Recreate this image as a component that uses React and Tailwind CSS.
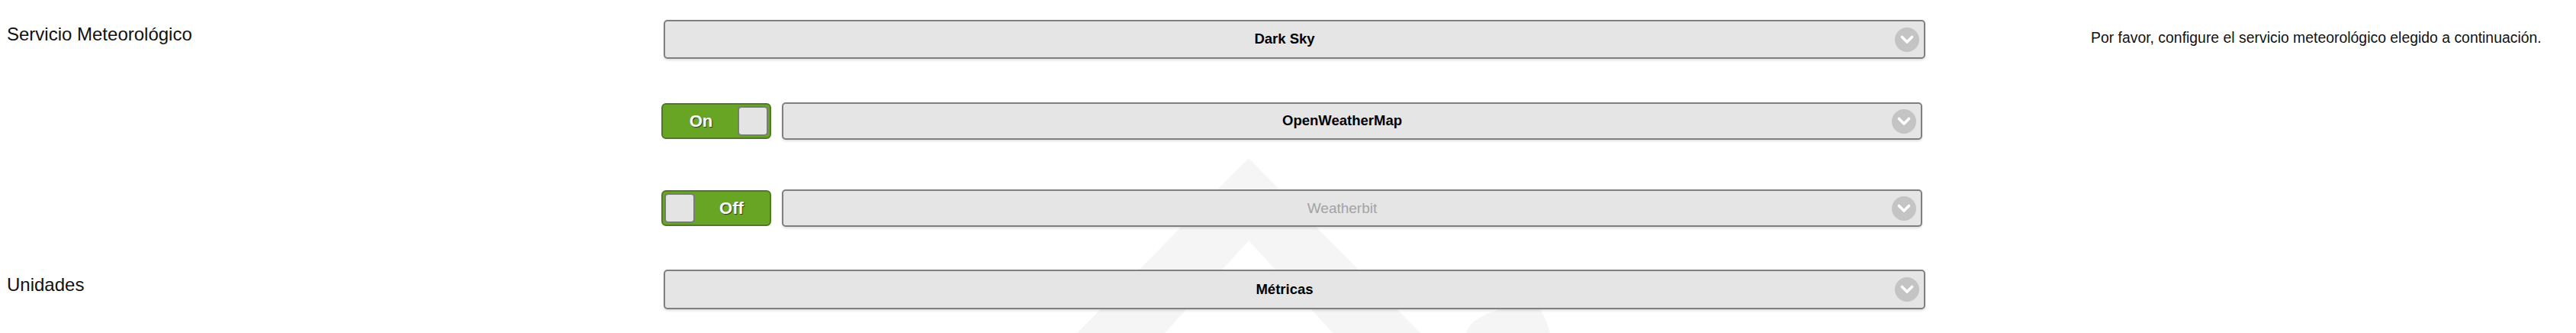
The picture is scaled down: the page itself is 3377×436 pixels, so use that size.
import React from "react";

function Chevron() {
  return (
    <div className="absolute right-[6px] top-1/2 -translate-y-1/2 w-[32px] h-[32px] rounded-full bg-[#c4c4c4] flex items-center justify-center">
      <svg width="18" height="12" viewBox="0 0 18 12">
        <path d="M2.5 2.5 L9 9 L15.5 2.5" fill="none" stroke="#ffffff" strokeWidth="3.6" strokeLinecap="round" strokeLinejoin="round" />
      </svg>
    </div>
  );
}

function Select({ label, h, disabled, className }) {
  return (
    <div
      className={
        "relative flex items-center justify-center border-2 border-[#7f7f7f] rounded-[5px] bg-[#e5e5e5] shadow-[0_2px_3px_rgba(0,0,0,0.12)] pr-[26px] " +
        className
      }
      style={{ height: h }}
    >
      {disabled ? (
        <span className="text-[19px] leading-none text-[#a3a3a3]">{label}</span>
      ) : (
        <span className="text-[18.5px] leading-none font-bold text-black">{label}</span>
      )}
      <Chevron />
    </div>
  );
}

function Toggle({ on }) {
  return (
    <div className="w-[144px] h-[47px] shrink-0 rounded-[6px] border-2 border-[#4f7a21] bg-[#69a524] p-[2px] flex items-stretch">
      {on ? (
        <>
          <div className="flex-1 flex items-center justify-center text-white font-bold text-[22px] leading-none [text-shadow:1px_1px_1px_#2d3d1a]">On</div>
          <div className="w-[40px] rounded-[5px] bg-[#e4e4e4] border-2 border-[#7a7a7a]" />
        </>
      ) : (
        <>
          <div className="w-[40px] rounded-[5px] bg-[#e4e4e4] border-2 border-[#7a7a7a]" />
          <div className="flex-1 flex items-center justify-center text-white font-bold text-[22px] leading-none [text-shadow:1px_1px_1px_#2d3d1a]">Off</div>
        </>
      )}
    </div>
  );
}

export default function App() {
  return (
    <div
      className="relative w-[3377px] h-[436px] bg-white overflow-hidden"
      style={{ fontFamily: '"Liberation Sans", Arial, sans-serif' }}
    >
      {/* watermark */}
      <svg className="absolute left-[1402px] top-[207px]" width="700" height="229" viewBox="0 0 700 229">
        <path d="M235 0 L10 229 L125 229 L235 108 L345 229 L460 229 Z" fill="#f5f5f5" />
        <path d="M560 200 C 600 170, 620 190, 630 229 L 520 229 C 525 215, 540 205, 560 200 Z" fill="#f5f5f5" />
      </svg>

      <div className="relative pt-[26px]">
        {/* Row A */}
        <div className="flex h-[51px]">
          <div className="w-[870px] shrink-0 pl-[9px] pt-[5px] text-[24px] leading-[28px] text-[#111]">
            Servicio Meteorológico
          </div>
          <Select label="Dark Sky" h={51} className="w-[1654px] shrink-0" />
          <div className="pl-[217px] pt-[11px] text-[19.4px] leading-[24px] text-[#111] whitespace-nowrap">
            Por favor, configure el servicio meteorológico elegido a continuación.
          </div>
        </div>

        {/* Row B */}
        <div className="flex items-center h-[49px] mt-[57px] pl-[867px]">
          <Toggle on />
          <Select label="OpenWeatherMap" h={49} className="w-[1495px] ml-[14px] shrink-0" />
        </div>

        {/* Row C */}
        <div className="flex items-center h-[49px] mt-[65px] pl-[867px]">
          <Toggle on={false} />
          <Select label="Weatherbit" h={49} disabled className="w-[1495px] ml-[14px] shrink-0" />
        </div>

        {/* Row D */}
        <div className="flex h-[52px] mt-[56px]">
          <div className="w-[870px] shrink-0 pl-[9px] pt-[6px] text-[24px] leading-[28px] text-[#111]">
            Unidades
          </div>
          <Select label="Métricas" h={52} className="w-[1654px] shrink-0" />
        </div>
      </div>
    </div>
  );
}
